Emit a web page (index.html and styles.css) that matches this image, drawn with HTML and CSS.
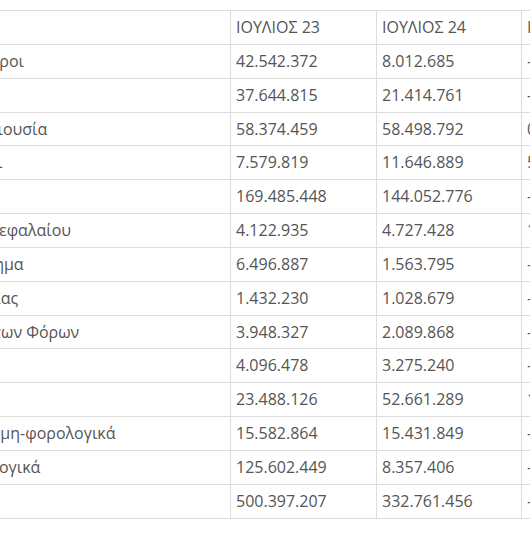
FILE: index.html
```html
<!DOCTYPE html>
<html lang="el">
<head>
<meta charset="utf-8">
<title>Έσοδα Ιουλίου</title>
<link rel="stylesheet" href="styles.css">
</head>
<body>
<div class="frame">
  <table class="data">
    <colgroup>
      <col class="c-label">
      <col class="c-num">
      <col class="c-num2">
      <col class="c-num2">
    </colgroup>
    <thead>
      <tr><th></th><th>ΙΟΥΛΙΟΣ 23</th><th>ΙΟΥΛΙΟΣ 24</th><th>ΙΟΥΛ. 24/23</th></tr>
    </thead>
    <tbody>
      <tr><td>Νέοι Φόροι</td><td>42.542.372</td><td>8.012.685</td><td>-81,17%</td></tr>
      <tr><td>ΦΠΑ</td><td>37.644.815</td><td>21.414.761</td><td>-43,11%</td></tr>
      <tr><td>Στη Περιουσία</td><td>58.374.459</td><td>58.498.792</td><td>0,21%</td></tr>
      <tr><td>Πάροχοι</td><td>7.579.819</td><td>11.646.889</td><td>53,66%</td></tr>
      <tr><td>Σύνολο</td><td>169.485.448</td><td>144.052.776</td><td>-15,01%</td></tr>
      <tr><td>Φόροι Κεφαλαίου</td><td>4.122.935</td><td>4.727.428</td><td>14,66%</td></tr>
      <tr><td>Επιχείρημα</td><td>6.496.887</td><td>1.563.795</td><td>-75,93%</td></tr>
      <tr><td>Ασφαλείας</td><td>1.432.230</td><td>1.028.679</td><td>-28,18%</td></tr>
      <tr><td>Υπόλοιπων Φόρων</td><td>3.948.327</td><td>2.089.868</td><td>-47,09%</td></tr>
      <tr><td>Τόκοι</td><td>4.096.478</td><td>3.275.240</td><td>-20,05%</td></tr>
      <tr><td>Άλλα</td><td>23.488.126</td><td>52.661.289</td><td>124,20%</td></tr>
      <tr><td>Τακτικά μη-φορολογικά</td><td>15.582.864</td><td>15.431.849</td><td>-0,97%</td></tr>
      <tr><td>Δεοντολογικά</td><td>125.602.449</td><td>8.357.406</td><td>-93,35%</td></tr>
      <tr><td>Σύνολο</td><td>500.397.207</td><td>332.761.456</td><td>-33,50%</td></tr>
    </tbody>
  </table>
</div>
</body>
</html>
```

FILE: styles.css
```css
html, body {
  margin: 0;
  padding: 0;
  background: #ffffff;
}

body {
  width: 530px;
  height: 545px;
  overflow: hidden;
  font-family: "Open Sans", "Noto Sans", sans-serif;
  font-size: 16px;
  color: #555555;
}

.frame {
  padding-top: 10px;
  overflow: hidden;
}

.data {
  border-collapse: collapse;
  table-layout: fixed;
  width: 734px;
  margin-left: -68px;
  border: 1px solid #dddddd;
}

.c-label { width: 298px; }
.c-num { width: 146px; }
.c-num2 { width: 145px; }

.data th,
.data td {
  border: 1px solid #dddddd;
  padding: 5px;
  line-height: 1.42857;
  text-align: left;
  font-weight: normal;
  white-space: nowrap;
  overflow: hidden;
  vertical-align: top;
}
```
